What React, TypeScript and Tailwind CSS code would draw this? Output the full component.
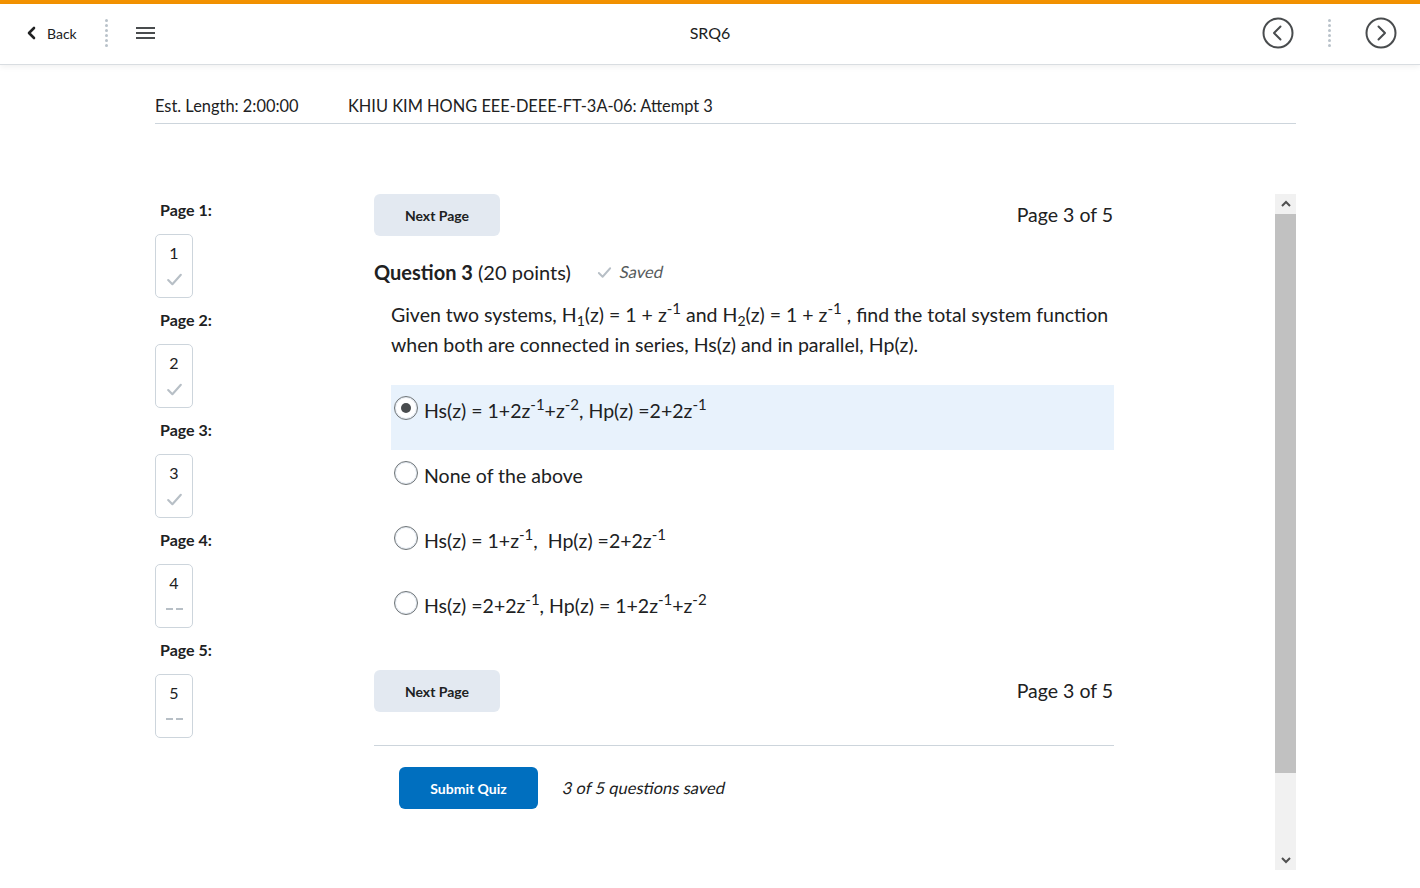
import React from "react";

const font = { fontFamily: "Lato, 'Open Sans', sans-serif" };

function Check({ className = "" }: { className?: string }) {
  return (
    <svg viewBox="0 0 18 18" className={className} fill="none" stroke="currentColor" strokeWidth="2" strokeLinecap="round" strokeLinejoin="round">
      <path d="M3 9.5 L7 13.5 L15 4.5" />
    </svg>
  );
}

function DotSep() {
  return (
    <div className="flex flex-col gap-[2px]">
      {Array.from({ length: 6 }).map((_, i) => (
        <div key={i} className="w-[3px] h-[3px] rounded-full bg-[#b9c2ca]" />
      ))}
    </div>
  );
}

function CircleArrow({ dir }: { dir: "left" | "right" }) {
  return (
    <svg width="32" height="32" viewBox="0 0 32 32" fill="none" stroke="#494c4e" strokeWidth="2" strokeLinecap="round" strokeLinejoin="round">
      <circle cx="16" cy="16" r="14.5" />
      {dir === "left" ? <path d="M18.5 9.5 L12 16 L18.5 22.5" /> : <path d="M13.5 9.5 L20 16 L13.5 22.5" />}
    </svg>
  );
}

function PageBox({ n, done }: { n: number; done: boolean }) {
  return (
    <div className="w-[38px] h-[64px] border border-[#cdd5dc] rounded-[5px] flex flex-col items-center pt-[6px]">
      <span className="text-[16px] leading-[24px] text-[#202122]">{n}</span>
      {done ? (
        <Check className="w-[19px] h-[19px] text-[#b7bfc6] mt-[5px]" />
      ) : (
        <div className="flex gap-[3px] mt-[13px]">
          <div className="w-[7px] h-[2px] bg-[#b7bfc6]" />
          <div className="w-[7px] h-[2px] bg-[#b7bfc6]" />
        </div>
      )}
    </div>
  );
}

function Radio({ checked }: { checked?: boolean }) {
  return (
    <div className="w-[24px] h-[24px] rounded-full border border-[#6e7477] bg-white flex items-center justify-center shrink-0 shadow-[inset_0_0_0_1px_#e3e9f1]">
      {checked && <div className="w-[10px] h-[10px] rounded-full bg-[#494c4e]" />}
    </div>
  );
}

const sup = "text-[15px] relative top-[-8px] align-baseline";
const sub = "text-[14px]";

function Option({ checked, children }: { checked?: boolean; children: React.ReactNode }) {
  return (
    <div className={`h-[65px] pl-[3px] pt-[11px] ${checked ? "bg-[#e8f2fc]" : ""}`}>
      <div className="flex items-start gap-[6px]">
        <Radio checked={checked} />
        <div className="text-[19.5px] leading-[30px] text-[#202122]">{children}</div>
      </div>
    </div>
  );
}

function NextRow() {
  return (
    <div className="flex items-center justify-between">
      <button className="w-[126px] h-[42px] rounded-[6px] bg-[#e3e9f1] text-[14px] font-bold text-[#202122]">Next Page</button>
      <span className="text-[19.5px] text-[#202122] pr-[1px]">Page 3 of 5</span>
    </div>
  );
}

export default function App() {
  return (
    <div className="w-[1420px] h-[888px] bg-white overflow-hidden text-[#202122]" style={font}>
      <div className="h-[4px] bg-[#f39200]" />
      <header className="h-[61px] pb-[2px] flex items-center border-b border-[#d9dde1] shadow-[0_2px_6px_rgba(0,0,0,0.06)] relative">
        <div className="flex items-center pl-[26px] w-[400px]">
          <svg width="12" height="14" viewBox="0 0 12 14" fill="none" stroke="#202122" strokeWidth="2.6" strokeLinecap="round" strokeLinejoin="round">
            <path d="M8 2 L3 7 L8 12" />
          </svg>
          <span className="ml-[9px] text-[14px] text-[#202122]">Back</span>
          <div className="ml-[28px]">
            <DotSep />
          </div>
          <div className="ml-[28px] flex flex-col gap-[3px]">
            <div className="w-[19px] h-[2px] bg-[#494c4e]" />
            <div className="w-[19px] h-[2px] bg-[#494c4e]" />
            <div className="w-[19px] h-[2px] bg-[#494c4e]" />
          </div>
        </div>
        <div className="flex-1 text-center text-[16px] text-[#202122]">SRQ6</div>
        <div className="w-[400px] flex items-center justify-end pr-[23px]">
          <CircleArrow dir="left" />
          <div className="mx-[34px]">
            <DotSep />
          </div>
          <CircleArrow dir="right" />
        </div>
      </header>

      <div className="px-[155px]">
        <div className="w-[1141px] pt-[29px] pb-[5px] border-b border-[#cdd5dc] flex text-[16.4px] leading-[24px]">
          <span className="w-[193px]">Est. Length: 2:00:00</span>
          <span>KHIU KIM HONG EEE-DEEE-FT-3A-06: Attempt 3</span>
        </div>

        <div className="flex mt-[70px] w-[1141px]">
          <div className="w-[219px] pt-[4px]">
            {[1, 2, 3, 4, 5].map((n) => (
              <div key={n} className="mb-[10px]">
                <div className="pl-[5px] text-[16px] leading-[24px] font-bold mb-[12px]">Page {n}:</div>
                <PageBox n={n} done={n <= 3} />
              </div>
            ))}
          </div>

          <div className="flex-1 flex h-[676px]">
            <div className="w-[740px]">
              <NextRow />
              <div className="mt-[22px] flex items-center h-[28px]">
                <span className="text-[20px] leading-[26px]">
                  <span className="font-bold">Question 3</span> (20 points)
                </span>
                <Check className="ml-[25px] w-[17px] h-[17px] text-[#b7bfc6]" />
                <span className="ml-[7px] text-[16.5px] text-[#565a5c] inline-block -skew-x-12">Saved</span>
              </div>
              <div className="mt-[14px] pl-[17px] text-[19.5px] leading-[30px]">
                Given two systems, H<sub className={sub}>1</sub>(z) = 1 + z<sup className={sup}>-1</sup> and H<sub className={sub}>2</sub>(z) = 1 + z<sup className={sup}>-1</sup> , find the total system function when both are connected in series, Hs(z) and in parallel, Hp(z).
              </div>
              <div className="mt-[25px] ml-[17px]">
                <Option checked>
                  Hs(z) = 1+2z<sup className={sup}>-1</sup>+z<sup className={sup}>-2</sup>, Hp(z) =2+2z<sup className={sup}>-1</sup>
                </Option>
                <Option>None of the above</Option>
                <Option>
                  Hs(z) = 1+z<sup className={sup}>-1</sup>,&nbsp; Hp(z) =2+2z<sup className={sup}>-1</sup>
                </Option>
                <Option>
                  Hs(z) =2+2z<sup className={sup}>-1</sup>, Hp(z) = 1+2z<sup className={sup}>-1</sup>+z<sup className={sup}>-2</sup>
                </Option>
              </div>
              <div className="mt-[25px]">
                <NextRow />
              </div>
              <div className="mt-[33px] border-t border-[#cdd5dc]" />
              <div className="mt-[21px] pl-[25px] flex items-center">
                <button className="w-[139px] h-[42px] rounded-[6px] bg-[#006fbf] text-white text-[14px] font-bold">Submit Quiz</button>
                <span className="ml-[25px] text-[16.5px] text-[#202122] inline-block -skew-x-12">3 of 5 questions saved</span>
              </div>
            </div>
            <div className="flex-1" />
            <div className="w-[21px] h-[676px] bg-[#f1f1f1] flex flex-col">
              <div className="h-[20px] flex items-center justify-center">
                <svg width="10" height="8" viewBox="0 0 10 8" fill="none" stroke="#505050" strokeWidth="2">
                  <path d="M1 6 L5 2 L9 6" />
                </svg>
              </div>
              <div className="h-[559px] bg-[#c1c1c1]" />
              <div className="flex-1" />
              <div className="h-[20px] flex items-center justify-center">
                <svg width="10" height="8" viewBox="0 0 10 8" fill="none" stroke="#505050" strokeWidth="2">
                  <path d="M1 2 L5 6 L9 2" />
                </svg>
              </div>
            </div>
          </div>
        </div>
      </div>
    </div>
  );
}
